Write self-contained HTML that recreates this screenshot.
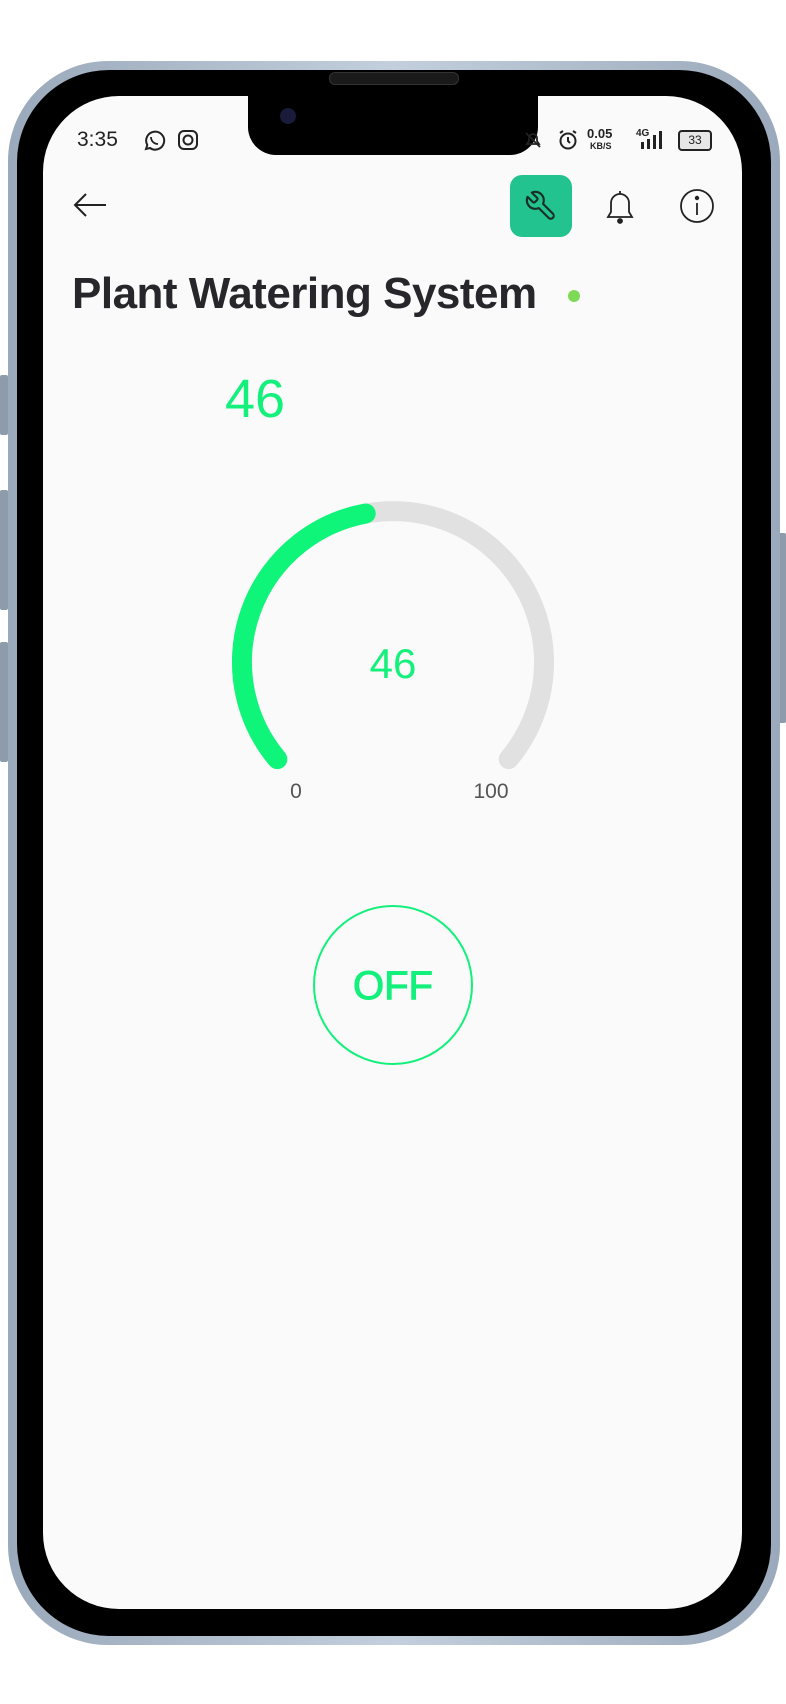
<!DOCTYPE html>
<html><head><meta charset="utf-8"><style>
html,body{margin:0;padding:0;background:#fff;}
body{width:786px;height:1704px;position:relative;overflow:hidden;font-family:"Liberation Sans",sans-serif;}
.btn{position:absolute;background:#8d9bab;border-radius:2px;}
.frame{position:absolute;left:8px;top:61px;width:772px;height:1584px;border-radius:100px;background:linear-gradient(90deg,#9aa9bb,#c3cfdc 50%,#9aa9bb);}
.black{position:absolute;left:17px;top:70px;width:754px;height:1566px;border-radius:92px;background:#000;}
.screen{position:absolute;left:43px;top:96px;width:699px;height:1513px;border-radius:76px;background:#fafafa;overflow:hidden;}
.notch{position:absolute;left:248px;top:90px;width:290px;height:65px;background:#000;border-radius:0 0 28px 28px;}
.spk{position:absolute;left:329px;top:72px;width:128px;height:11px;border-radius:6px;background:#1a1a1a;border:1px solid #333;}
.cam{position:absolute;left:280px;top:108px;width:16px;height:16px;border-radius:50%;background:#1a1a3a;}
.t{position:absolute;white-space:nowrap;}
</style></head><body>
<div class="btn" style="left:0;top:375px;width:8px;height:60px"></div>
<div class="btn" style="left:0;top:490px;width:8px;height:120px"></div>
<div class="btn" style="left:0;top:642px;width:8px;height:120px"></div>
<div class="btn" style="left:778px;top:533px;width:8px;height:190px"></div>
<div class="frame"></div>
<div class="black"></div>
<div class="screen"></div>
<div class="notch"></div>
<div class="spk"></div>
<div class="cam"></div>

<div class="t" style="left:77px;top:128px;font-size:21px;color:#222">3:35</div>
<svg style="position:absolute;left:142px;top:129px" width="24" height="24" viewBox="0 0 24 24" fill="none" stroke="#222" stroke-width="2"><path d="M4 20l1.3-4A9 9 0 1 1 8 19z"/><path d="M9 8c0 4 3 7 7 7" stroke-width="1.8"/></svg>
<svg style="position:absolute;left:177px;top:129px" width="22" height="22" viewBox="0 0 22 22" fill="none" stroke="#222" stroke-width="2"><rect x="2" y="2" width="18" height="18" rx="5"/><circle cx="11" cy="11" r="4.5"/></svg>
<svg style="position:absolute;left:523px;top:130px" width="20" height="20" viewBox="0 0 20 20" fill="none" stroke="#222" stroke-width="1.8"><path d="M4 14h12l-2-3V8a4 4 0 0 0-8 0v3z"/><path d="M3 3l14 14"/></svg>
<svg style="position:absolute;left:557px;top:129px" width="22" height="22" viewBox="0 0 22 22" fill="none" stroke="#222" stroke-width="2"><circle cx="11" cy="12" r="7.5"/><path d="M11 8v4l2 2M3 4l3-2M19 4l-3-2"/></svg>
<div class="t" style="left:587px;top:126px;font-size:13px;font-weight:bold;color:#222">0.05</div>
<div class="t" style="left:590px;top:141px;font-size:9px;font-weight:bold;color:#222">KB/S</div>
<div class="t" style="left:636px;top:128px;font-size:10px;font-weight:bold;color:#222">4G</div>
<svg style="position:absolute;left:640px;top:130px" width="26" height="20" viewBox="0 0 26 20" fill="#222"><rect x="1" y="12" width="3" height="7"/><rect x="7" y="9" width="3" height="10"/><rect x="13" y="5" width="3" height="14"/><rect x="19" y="1" width="3" height="18"/></svg>
<div class="t" style="left:678px;top:130px;width:30px;height:17px;border:2px solid #222;border-radius:4px;font-size:12px;text-align:center;line-height:17px;background:#e6e6e6;color:#222">33</div>

<svg style="position:absolute;left:72px;top:192px" width="36" height="26" viewBox="0 0 36 26" fill="none" stroke="#222" stroke-width="2"><path d="M3 13h31M14 2L3 13l11 11"/></svg>
<div style="position:absolute;left:510px;top:175px;width:62px;height:62px;border-radius:12px;background:#22c38e"></div>
<svg style="position:absolute;left:524px;top:189px" width="34" height="34" viewBox="0 0 24 24" fill="none" stroke="#1a2e25" stroke-width="1.5" stroke-linejoin="round"><path d="M14.7 6.3a1 1 0 0 0 0 1.4l1.6 1.6a1 1 0 0 0 1.4 0l3.77-3.77a6 6 0 0 1-7.94 7.94l-6.91 6.91a2.12 2.12 0 0 1-3-3l6.91-6.91a6 6 0 0 1 7.94-7.940l-3.76 3.76z" transform="scale(-1,1) translate(-24,0)"/></svg>
<svg style="position:absolute;left:603px;top:188px" width="34" height="38" viewBox="0 0 34 38" fill="none" stroke="#222" stroke-width="1.8"><path d="M5 29h24l-3-5V15a9 9 0 0 0-18 0v9z"/><path d="M17 3v3"/><circle cx="17" cy="33" r="2" fill="#222"/></svg>
<svg style="position:absolute;left:679px;top:188px" width="36" height="36" viewBox="0 0 36 36" fill="none" stroke="#222" stroke-width="1.8"><circle cx="18" cy="18" r="16"/><path d="M18 15v12"/><circle cx="18" cy="10" r="1.3" fill="#222"/></svg>

<div class="t" style="left:72px;top:269px;font-size:44px;font-weight:bold;color:#26262b;letter-spacing:-0.5px">Plant Watering System</div>
<div style="position:absolute;left:568px;top:290px;width:12px;height:12px;border-radius:50%;background:#7ed957"></div>

<div class="t" style="left:225px;top:368px;font-size:54px;color:#13f07b">46</div>

<svg style="position:absolute;left:0;top:0" width="786" height="1704">
<path d="M277.3 759.1 A151 151 0 1 1 508.7 759.1" fill="none" stroke="#e1e1e1" stroke-width="20" stroke-linecap="round"/>
<path d="M277.3 759.1 A151 151 0 0 1 365.7 513.5" fill="none" stroke="#0ff57a" stroke-width="20" stroke-linecap="round"/>
<circle cx="393" cy="985" r="79" fill="none" stroke="#13f07b" stroke-width="2"/>
</svg>
<div class="t" style="left:343px;top:640px;width:100px;text-align:center;font-size:42px;color:#13f07b">46</div>
<div class="t" style="left:276px;top:780px;width:40px;text-align:center;font-size:21px;color:#555">0</div>
<div class="t" style="left:461px;top:780px;width:60px;text-align:center;font-size:21px;color:#555">100</div>
<div class="t" style="left:313px;top:964px;width:160px;text-align:center;font-size:40px;color:#13f07b;-webkit-text-stroke:1px #13f07b">OFF</div>
</body></html>
